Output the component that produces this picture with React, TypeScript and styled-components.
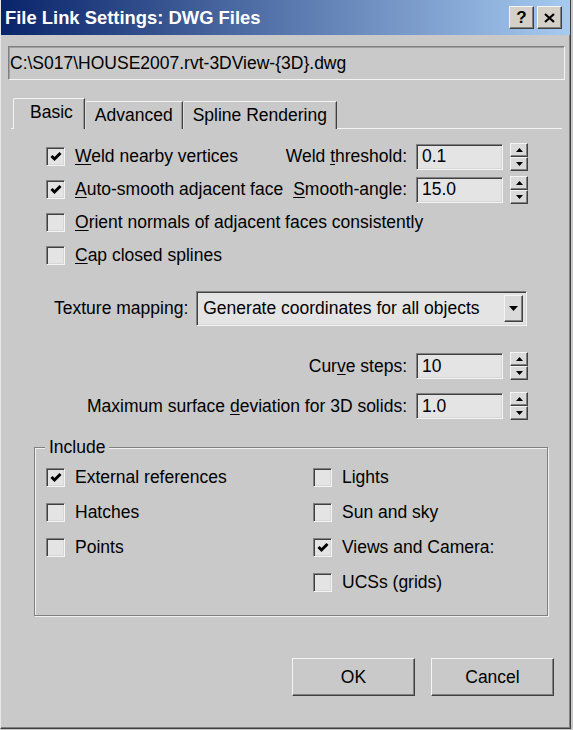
import React from "react"
import styled, { createGlobalStyle } from "styled-components"

const GlobalStyle = createGlobalStyle`
  html, body {
    margin: 0;
    padding: 0;
    background: #c9c9c9;
  }
  body {
    font-family: "Liberation Sans", Arial, sans-serif;
    font-size: 17.5px;
    color: #000;
  }
`

const Window = styled.div`
  width: 571px;
  height: 729px;
  box-sizing: border-box;
  background: #c9c9c9;
  border-left: 1px solid #e6e6e6;
  border-right: 1px solid #404040;
  border-bottom: 1px solid #404040;
  box-shadow: inset -1px -1px 0 #808080;
  display: flex;
  flex-direction: column;
`

const TitleBar = styled.div`
  height: 35px;
  flex: none;
  display: flex;
  align-items: center;
  padding: 0 8px 0 4px;
  background: linear-gradient(to right, #0a246a, #a6caf0);
  color: #fff;
  font-weight: bold;
  font-size: 18.4px;
`

const TitleButtons = styled.div`
  margin-left: auto;
  display: flex;
  gap: 3px;
`

const raised = `
  border-top: 1px solid #f4f4f4;
  border-left: 1px solid #f4f4f4;
  border-right: 1px solid #404040;
  border-bottom: 1px solid #404040;
  box-shadow: inset -1px -1px 0 #808080;
`

const sunken = `
  border-top: 1px solid #808080;
  border-left: 1px solid #808080;
  border-right: 1px solid #f4f4f4;
  border-bottom: 1px solid #f4f4f4;
  box-shadow: inset 1px 1px 0 #404040, inset -1px -1px 0 #d6d6d6;
`

const CaptionButton = styled.div`
  width: 25px;
  height: 23px;
  box-sizing: border-box;
  background: #d4d0c8;
  ${raised}
  display: flex;
  align-items: center;
  justify-content: center;
  color: #000;
  font-size: 17px;
  font-weight: bold;
`

const Body = styled.div`
  flex: 1;
  display: flex;
  flex-direction: column;
  padding: 0 5px 0 7px;
`

const PathField = styled.div`
  margin-top: 11px;
  height: 34px;
  box-sizing: border-box;
  ${sunken}
  box-shadow: inset 1px 1px 0 #a0a0a0;
  display: flex;
  align-items: center;
  padding-left: 1px;
`

const TabStrip = styled.div`
  margin: 18px 0 -1px 5px;
  height: 31px;
  display: flex;
  align-items: flex-end;
  position: relative;
  z-index: 1;
`

const Tab = styled.div<{ $active?: boolean }>`
  height: ${(p) => (p.$active ? 31 : 28)}px;
  box-sizing: border-box;
  padding: ${(p) => (p.$active ? "0 11px 3px 16px" : "0 9px")};
  display: flex;
  align-items: center;
  background: #c9c9c9;
  border-top: 1px solid #f4f4f4;
  border-left: 1px solid ${(p) => (p.$active ? "#f4f4f4" : "#dedede")};
  border-right: 1px solid #404040;
  box-shadow: inset -1px 0 0 #9a9a9a;
  border-top-left-radius: 2px;
`

const Pane = styled.div`
  margin: 0 3px;
  border-top: 1px solid #f4f4f4;
  padding: 11px 0 16px 1px;
  display: flex;
  flex-direction: column;
`

const OptionRow = styled.div`
  height: 33px;
  padding: 0 34px;
  display: flex;
  align-items: center;
  justify-content: space-between;
`

const CheckItem = styled.label`
  display: flex;
  align-items: center;
  gap: 10px;
  white-space: nowrap;
`

const Box = styled.span`
  width: 19px;
  height: 19px;
  box-sizing: border-box;
  flex: none;
  background: #e4e4e4;
  ${sunken}
  display: flex;
  align-items: center;
  justify-content: center;
`

const Acc = styled.u`
  text-decoration: underline;
  text-underline-offset: 2px;
`

const FieldGroup = styled.div`
  display: flex;
  align-items: center;
`

const FieldLabel = styled.span`
  margin-right: 9px;
  white-space: nowrap;
`

const NumField = styled.div`
  width: 87px;
  height: 26px;
  box-sizing: border-box;
  background: #e4e4e4;
  ${sunken}
  display: flex;
  align-items: center;
  padding-left: 5px;
`

const Spinner = styled.div`
  width: 18px;
  height: 28px;
  margin-left: 7px;
  display: flex;
  flex-direction: column;
`

const SpinHalf = styled.div`
  flex: 1;
  box-sizing: border-box;
  background: #dadada;
  ${raised}
  display: flex;
  align-items: center;
  justify-content: center;
`

const TextureRow = styled.div`
  margin-top: 19px;
  height: 35px;
  padding: 0 35px 0 42px;
  display: flex;
  align-items: center;
  gap: 8px;
`

const Combo = styled.div`
  flex: 1;
  height: 35px;
  box-sizing: border-box;
  background: #e4e4e4;
  ${sunken}
  display: flex;
  align-items: center;
  padding: 0 3px 0 6px;
`

const ComboText = styled.span`
  flex: 1;
`

const DropButton = styled.div`
  width: 19px;
  height: 27px;
  box-sizing: border-box;
  background: #dadada;
  ${raised}
  display: flex;
  align-items: center;
  justify-content: center;
`

const RightRow = styled.div<{ $first?: boolean }>`
  margin-top: ${(p) => (p.$first ? 20 : 0)}px;
  height: 40px;
  padding: 0 34px;
  display: flex;
  align-items: center;
  justify-content: flex-end;
`

const Group = styled.div`
  position: relative;
  margin: 21px 14px 0 22px;
  padding: 12px 0 15px 11px;
  border: 1px solid #808080;
  box-shadow: inset 1px 1px 0 #f0f0f0, 1px 1px 0 #f0f0f0;
  display: grid;
  grid-template-columns: 267px 1fr;
  grid-auto-rows: 35px;
  align-items: center;
`

const Legend = styled.span`
  position: absolute;
  top: -11px;
  left: 10px;
  padding: 0 4px;
  line-height: 20px;
  background: #c9c9c9;
`

const ButtonRow = styled.div`
  margin-top: 26px;
  padding-right: 11px;
  display: flex;
  justify-content: flex-end;
  gap: 16px;
`

const PushButton = styled.div`
  width: 123px;
  height: 38px;
  box-sizing: border-box;
  background: #c9c9c9;
  ${raised}
  display: flex;
  align-items: center;
  justify-content: center;
`

const Check = () => (
  <svg width="12" height="11" viewBox="0 0 12 11">
    <path d="M1.5 5 L4.5 8 L10.5 2" fill="none" stroke="#000" strokeWidth="3" />
  </svg>
)

const CheckBox: React.FC<{ checked?: boolean; children: React.ReactNode }> = ({
  checked,
  children,
}) => (
  <CheckItem>
    <Box>{checked ? <Check /> : null}</Box>
    <span>{children}</span>
  </CheckItem>
)

const Arrow = ({ down }: { down?: boolean }) => (
  <svg width="7" height="4" viewBox="0 0 7 4">
    <path d={down ? "M0 0 H7 L3.5 4 Z" : "M0 4 H7 L3.5 0 Z"} fill="#000" />
  </svg>
)

const NumberInput: React.FC<{ value: string }> = ({ value }) => (
  <>
    <NumField>{value}</NumField>
    <Spinner>
      <SpinHalf>
        <Arrow />
      </SpinHalf>
      <SpinHalf>
        <Arrow down />
      </SpinHalf>
    </Spinner>
  </>
)

export default function App() {
  return (
    <>
      <GlobalStyle />
      <Window>
        <TitleBar>
          <span>File Link Settings: DWG Files</span>
          <TitleButtons>
            <CaptionButton>?</CaptionButton>
            <CaptionButton>
              <svg width="11" height="10" viewBox="0 0 11 10">
                <path d="M1 1 L10 9 M10 1 L1 9" stroke="#000" strokeWidth="2.2" />
              </svg>
            </CaptionButton>
          </TitleButtons>
        </TitleBar>
        <Body>
          <PathField>C:\S017\HOUSE2007.rvt-3DView-{"{3D}"}.dwg</PathField>
          <TabStrip>
            <Tab $active>Basic</Tab>
            <Tab>Advanced</Tab>
            <Tab>Spline Rendering</Tab>
          </TabStrip>
          <Pane>
            <OptionRow>
              <CheckBox checked>
                <Acc>W</Acc>eld nearby vertices
              </CheckBox>
              <FieldGroup>
                <FieldLabel>
                  Weld <Acc>t</Acc>hreshold:
                </FieldLabel>
                <NumberInput value="0.1" />
              </FieldGroup>
            </OptionRow>
            <OptionRow>
              <CheckBox checked>
                <Acc>A</Acc>uto-smooth adjacent face
              </CheckBox>
              <FieldGroup>
                <FieldLabel>
                  <Acc>S</Acc>mooth-angle:
                </FieldLabel>
                <NumberInput value="15.0" />
              </FieldGroup>
            </OptionRow>
            <OptionRow>
              <CheckBox>
                <Acc>O</Acc>rient normals of adjacent faces consistently
              </CheckBox>
            </OptionRow>
            <OptionRow>
              <CheckBox>
                <Acc>C</Acc>ap closed splines
              </CheckBox>
            </OptionRow>
            <TextureRow>
              <span>Texture mapping:</span>
              <Combo>
                <ComboText>Generate coordinates for all objects</ComboText>
                <DropButton>
                  <svg width="9" height="5" viewBox="0 0 9 5">
                    <path d="M0 0 H9 L4.5 5 Z" fill="#000" />
                  </svg>
                </DropButton>
              </Combo>
            </TextureRow>
            <RightRow $first>
              <FieldLabel>
                Cur<Acc>v</Acc>e steps:
              </FieldLabel>
              <NumberInput value="10" />
            </RightRow>
            <RightRow>
              <FieldLabel>
                Maximum surface <Acc>d</Acc>eviation for 3D solids:
              </FieldLabel>
              <NumberInput value="1.0" />
            </RightRow>
            <Group>
              <Legend>Include</Legend>
              <CheckBox checked>External references</CheckBox>
              <CheckBox>Lights</CheckBox>
              <CheckBox>Hatches</CheckBox>
              <CheckBox>Sun and sky</CheckBox>
              <CheckBox>Points</CheckBox>
              <CheckBox checked>Views and Camera:</CheckBox>
              <span />
              <CheckBox>UCSs (grids)</CheckBox>
            </Group>
          </Pane>
          <ButtonRow>
            <PushButton>OK</PushButton>
            <PushButton>Cancel</PushButton>
          </ButtonRow>
        </Body>
      </Window>
    </>
  )
}
